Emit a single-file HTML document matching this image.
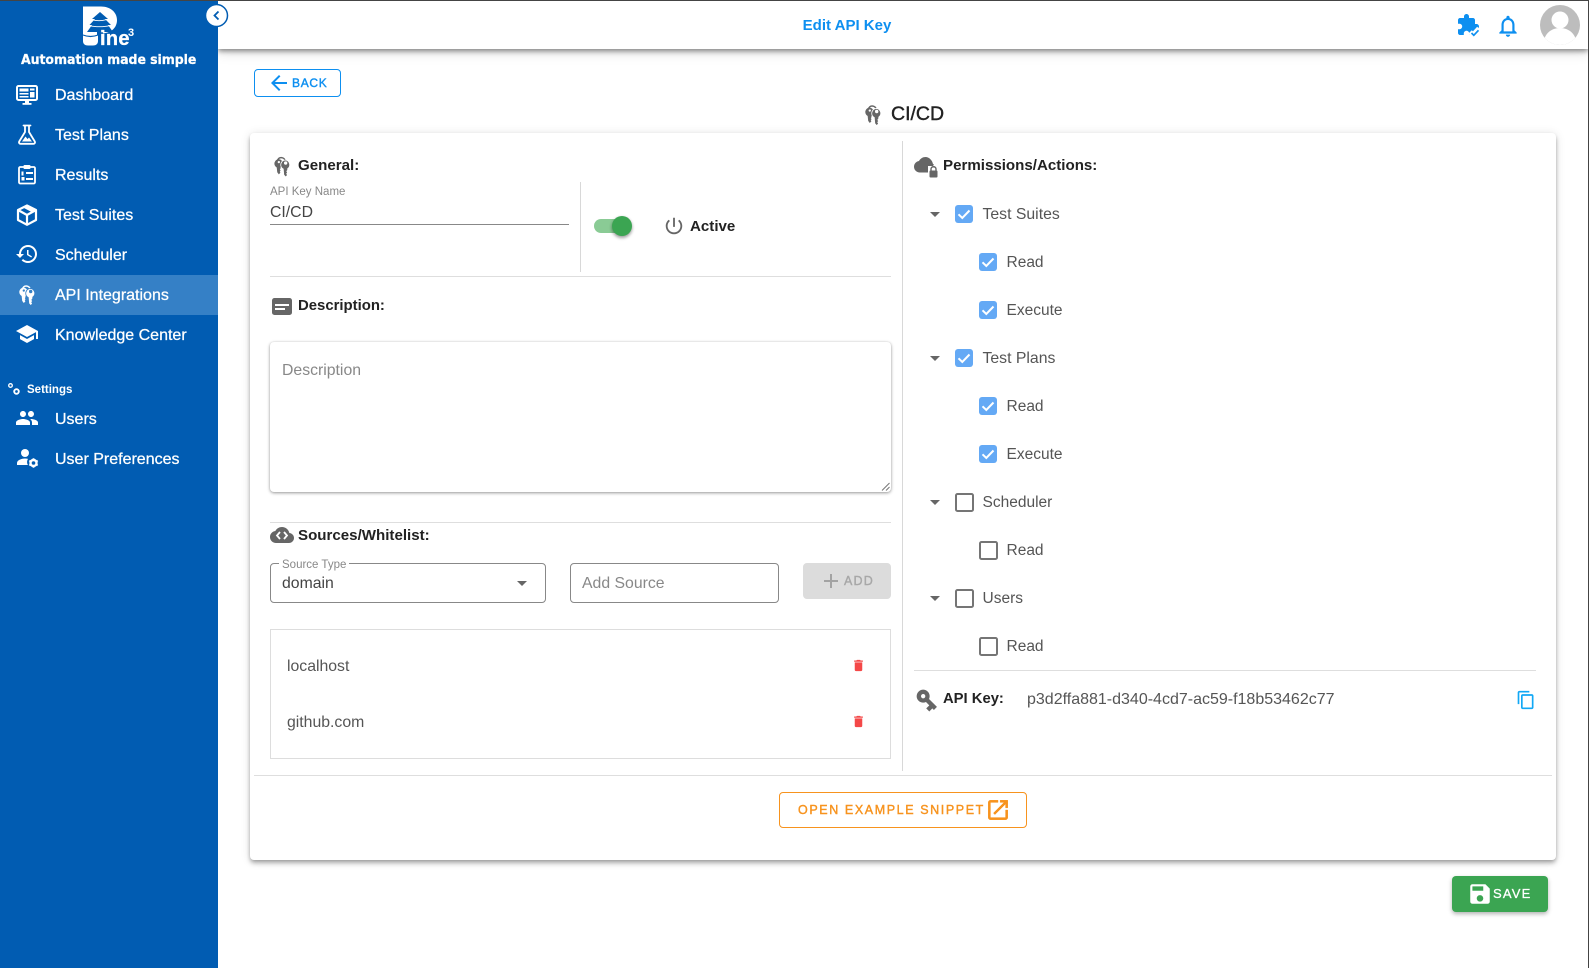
<!DOCTYPE html>
<html><head><meta charset="utf-8"><style>
html,body{margin:0;padding:0;width:1589px;height:968px;overflow:hidden;background:#fff;font-family:"Liberation Sans",sans-serif;color:#222}
.a{position:absolute;white-space:nowrap}
svg{position:absolute;display:block}
.nav{position:absolute;left:55px;color:#fff;font-size:16px;line-height:20px;-webkit-text-stroke:.25px #fff}
.h{position:absolute;font-size:15.1px;font-weight:700;line-height:20px;color:#222;white-space:nowrap}
.t{position:absolute;font-size:15.8px;line-height:20px;color:#555;white-space:nowrap}
.hr{position:absolute;height:1px;background:#dedede}
.vr{position:absolute;width:1px;background:#d8d8d8}
.cb{position:absolute;width:18px;height:18px;border-radius:3px;background:#64a9f5}
.cb svg{left:0;top:0}
.ub{position:absolute;width:14.5px;height:14.5px;border:2px solid #757575;border-radius:2.5px}
.ar{position:absolute;width:0;height:0;border-left:5px solid transparent;border-right:5px solid transparent;border-top:5px solid #666}
</style></head><body>
<svg width="0" height="0" style="position:absolute"><defs>
<symbol id="keys" viewBox="0 0 16 20">
<path d="M3.300 5C3.300 .3 10.300 .3 10.800 5.500" fill="none" stroke="currentColor" stroke-width="1.400"/>
<path fill="currentColor" fill-rule="evenodd" d="M4.500 3a4.200 4.200 0 0 0-2 7.900L3 15.500l1.500 2 1.500-1.500-.6-1.200.8-.8-.7-1 .5-.8.200-1.500A4.200 4.200 0 0 0 4.500 3zM4.500 4.700a1.100 1.100 0 1 1 0 2.200 1.100 1.100 0 0 1 0-2.200z"/>
<path fill="currentColor" fill-rule="evenodd" stroke="var(--bg,#fff)" stroke-width=".8" d="M11 3.800a4.600 4.600 0 0 0-2.300 8.600l.5 5.600 1.800 2 1.800-1.800-.8-1.400.9-1-.8-1.200.8-1 .1-1.600A4.600 4.600 0 0 0 11 3.800zM11 5.500a1.200 1.200 0 1 1 0 2.400 1.200 1.200 0 0 1 0-2.400z"/>
</symbol>
</defs></svg>

<!-- top dark line / right edge -->
<div class="a" style="left:0;top:0;width:1589px;height:1px;background:#444;z-index:9"></div>
<div class="a" style="left:1588px;top:0;width:1px;height:968px;background:#444;z-index:9"></div>

<!-- top bar -->
<div class="a" style="left:218px;top:1px;width:1370px;height:48px;background:#fff;box-shadow:0 2px 5px rgba(0,0,0,.45),0 4px 12px rgba(0,0,0,.12)"></div>
<div class="a" style="left:790px;top:16px;width:114px;text-align:center;font-size:15px;line-height:20px;font-weight:700;color:#0d8ff0">Edit API Key</div>
<svg style="left:1456px;top:13px" width="24" height="24" viewBox="0 0 24 24"><path fill="#0d8ff0" d="M20.500 11H19V7c0-1.100-.9-2-2-2h-4V3.500C13 2.120 11.880 1 10.500 1S8 2.120 8 3.500V5H4c-1.100 0-1.990.9-1.990 2v3.800H3.500c1.490 0 2.700 1.210 2.700 2.700s-1.210 2.700-2.700 2.700H2V20c0 1.100.9 2 2 2h3.800v-1.500c0-1.490 1.210-2.700 2.700-2.700 1.490 0 2.700 1.210 2.700 2.700V22H17c1.100 0 2-.9 2-2v-4h1.500c1.380 0 2.500-1.120 2.500-2.500S21.880 11 20.500 11z"/><path d="M14 19l3 3 6-6.500" fill="none" stroke="#fff" stroke-width="5"/><path d="M15.500 20l2.300 2.300 4.700-5" fill="none" stroke="#0d8ff0" stroke-width="1.700"/></svg>
<svg style="left:1495px;top:13px" width="26" height="26" viewBox="0 0 24 24"><path fill="#0d8ff0" d="M12 22c1.100 0 2-.9 2-2h-4c0 1.100.89 2 2 2zm6-6v-5c0-3.070-1.640-5.640-4.500-6.320V4c0-.83-.67-1.500-1.500-1.500s-1.500.67-1.500 1.500v.68C7.630 5.360 6 7.920 6 11v5l-2 2v1h16v-1l-2-2zm-2 1H8v-6c0-2.480 1.510-4.500 4-4.500s4 2.020 4 4.500v6z"/></svg>
<svg style="left:1540px;top:5px" width="40" height="40" viewBox="0 0 40 40"><defs><clipPath id="c"><circle cx="20" cy="20" r="20"/></clipPath></defs><g clip-path="url(#c)"><rect width="40" height="40" fill="#bdbdbd"/><circle cx="20" cy="15" r="8.500" fill="#fff"/><path d="M3 42c0-13 8-19 17-19s17 6 17 19z" fill="#fff"/></g></svg>

<!-- sidebar -->
<div class="a" style="left:0;top:1px;width:218px;height:967px;background:#015cb2"></div>
<div class="a" style="left:0;top:275px;width:218px;height:40px;background:#3580c6"></div>

<!-- logo -->
<svg style="left:80px;top:4px" width="56" height="44" viewBox="0 0 56 44">
<path fill="#fff" d="M3 2.500H21C30 2.500 37 8 37 16 37 24 31 29 22 29.500H18V37C18 40 16 41.500 13 41.500H8C5 41.500 3 40 3 37Z"/>
<path fill="#015cb2" d="M20 8L28 15H25L31 21H28L33 28H23V31H17V28H7L12 21H9.500L15 15H12Z"/>
<path d="M12 15.800C16 17 22 17 26 15.800M10 21.800C15 23 24 23 29 21.800" fill="none" stroke="#fff" stroke-width=".8"/>
<path d="M3 31C8 33 13 33 18 31" fill="none" stroke="#015cb2" stroke-width="1.200"/>
</svg>
<div class="a" style="left:100px;top:29px;font-size:20px;line-height:20px;font-weight:700;color:#fff;letter-spacing:.3px;-webkit-text-stroke:.3px #fff">ine</div>
<div class="a" style="left:128px;top:28px;font-size:11px;line-height:11px;font-weight:700;color:#fff">3</div>
<div class="a" style="left:21px;top:53px;font-size:13px;line-height:16px;font-weight:700;color:#fff;font-family:'DejaVu Sans',sans-serif;letter-spacing:-.08px;transform-origin:0 50%;transform:scaleX(.965);-webkit-text-stroke:.25px #fff">Automation made simple</div>

<!-- collapse -->
<svg style="left:204px;top:3px" width="25" height="25" viewBox="0 0 25 25"><circle cx="12.500" cy="12.500" r="11" fill="#fff" stroke="#015cb2" stroke-width="1.500"/><path d="M14.500 8.500l-4 4 4 4" fill="none" stroke="#015cb2" stroke-width="1.800"/></svg>

<!-- nav icons -->
<svg style="left:16px;top:84px" width="22" height="22" viewBox="0 0 22 22"><rect x="1" y="2" width="20" height="14" rx="1.500" fill="none" stroke="#fff" stroke-width="2"/><rect x="3.500" y="4.500" width="9" height="3" fill="#fff"/><rect x="14" y="4.500" width="4.500" height="2" fill="#fff"/><rect x="14" y="8" width="4.500" height="5.500" fill="#fff"/><rect x="3.500" y="9" width="9" height="1.500" fill="#fff"/><rect x="3.500" y="12" width="9" height="1.500" fill="#fff"/><rect x="9" y="16.500" width="4" height="2.500" fill="#fff"/><rect x="6.500" y="19" width="9" height="1.800" fill="#fff"/></svg>
<svg style="left:17px;top:124px" width="20" height="21" viewBox="0 0 20 21"><path d="M6.500 1.500h7M8 2v6L2.200 17.500c-.6 1.200.2 2.300 1.400 2.300h12.800c1.200 0 2-1.100 1.400-2.300L12 8V2" fill="none" stroke="#fff" stroke-width="1.800" stroke-linejoin="round" stroke-linecap="round"/><path d="M5 17.500l3.500-5 2 2.500 1.500-1.500 3 4z" fill="#fff"/></svg>
<svg style="left:17px;top:164px" width="20" height="21" viewBox="0 0 20 21"><rect x="2" y="3" width="16" height="16.500" rx="1.200" fill="none" stroke="#fff" stroke-width="1.800"/><rect x="6.500" y="1" width="7" height="4" rx="1" fill="#fff"/><rect x="4.500" y="7.500" width="2" height="4" fill="#fff"/><rect x="9" y="8" width="7" height="2" fill="#fff"/><rect x="4.500" y="13" width="3" height="3.500" fill="#fff"/><rect x="9" y="14" width="7" height="2" fill="#fff"/></svg>
<svg style="left:16px;top:204px" width="22" height="22" viewBox="0 0 22 22"><path d="M11 1.500L2 6v10l9 4.800 9-4.800V6zM11 11v9.500M2 6l9 5 9-5" fill="none" stroke="#fff" stroke-width="2.200" stroke-linejoin="round"/><path d="M11 1.500L20 6l-4 2.200L7 3.500z" fill="#fff"/></svg>
<svg style="left:15px;top:242px" width="24" height="24" viewBox="0 0 24 24"><path fill="#fff" d="M13 3c-4.970 0-9 4.030-9 9H1l3.890 3.890.07.14L9 12H6c0-3.870 3.130-7 7-7s7 3.130 7 7-3.130 7-7 7c-1.930 0-3.680-.79-4.940-2.060l-1.420 1.420C8.270 19.990 10.510 21 13 21c4.970 0 9-4.030 9-9s-4.030-9-9-9zm-1 5v5l4.280 2.540.72-1.210-3.500-2.080V8H12z"/></svg>
<svg style="left:19px;top:284px;color:#fff;--bg:#3580c6" width="17" height="22"><use href="#keys" width="17" height="22"/></svg>
<svg style="left:15px;top:322px" width="24" height="24" viewBox="0 0 24 24"><path fill="#fff" d="M5 13.180v4L12 21l7-3.820v-4L12 17l-7-3.820zM12 3L1 9l11 6 9-4.910V17h2V9L12 3z"/></svg>
<svg style="left:7px;top:382px" width="14" height="14" viewBox="0 0 14 14"><circle cx="3.500" cy="3.500" r="1.800" fill="none" stroke="#fff" stroke-width="1.300"/><circle cx="9.500" cy="9.500" r="2.300" fill="none" stroke="#fff" stroke-width="1.900"/></svg>
<svg style="left:15px;top:406px" width="24" height="24" viewBox="0 0 24 24"><path fill="#fff" d="M16 11c1.660 0 2.990-1.340 2.990-3S17.660 5 16 5c-1.660 0-3 1.340-3 3s1.340 3 3 3zm-8 0c1.660 0 2.990-1.340 2.990-3S9.660 5 8 5C6.340 5 5 6.340 5 8s1.340 3 3 3zm0 2c-2.330 0-7 1.170-7 3.500V19h14v-2.500c0-2.330-4.670-3.500-7-3.500zm8 0c-.29 0-.62.020-.97.050 1.160.84 1.970 1.970 1.970 3.450V19h6v-2.500c0-2.330-4.670-3.500-7-3.500z"/></svg>
<svg style="left:15px;top:446px" width="24" height="24" viewBox="0 0 24 24"><circle cx="10" cy="7" r="4" fill="#fff"/><path fill="#fff" d="M2 19v-2c0-3 5-4.500 8-4.500 1 0 2 .1 3 .4-.7 1-1 2.400-.9 3.600.1.900.3 1.800.9 2.500z"/><circle cx="18.500" cy="17" r="3" fill="none" stroke="#fff" stroke-width="2.400"/><path d="M18.500 12.200v1.800M18.500 20v1.800M14.300 14.600l1.600 1M21.100 18.400l1.600 1M14.300 19.400l1.600-1M21.100 15.600l1.600-1" stroke="#fff" stroke-width="1.800"/></svg>

<div class="nav" style="top:86px">Dashboard</div>
<div class="nav" style="top:126px">Test Plans</div>
<div class="nav" style="top:166px">Results</div>
<div class="nav" style="top:206px">Test Suites</div>
<div class="nav" style="top:246px">Scheduler</div>
<div class="nav" style="top:286px">API Integrations</div>
<div class="nav" style="top:326px">Knowledge Center</div>
<div class="a" style="left:27px;top:383px;font-size:11.500px;line-height:14px;color:#fff;font-weight:700">Settings</div>
<div class="nav" style="top:410px">Users</div>
<div class="nav" style="top:450px">User Preferences</div>

<!-- back -->
<div class="a" style="left:254px;top:69px;width:85px;height:26px;border:1px solid #0d8ff0;border-radius:4px"></div>
<svg style="left:267px;top:71px" width="24" height="24" viewBox="0 0 24 24"><path fill="#0d8ff0" d="M20 11H7.830l5.590-5.590L12 4l-8 8 8 8 1.410-1.410L7.830 13H20v-2z"/></svg>
<div class="a" style="left:292px;top:75px;font-size:12px;line-height:16px;color:#0d8ff0;letter-spacing:.7px;-webkit-text-stroke:.4px #0d8ff0">BACK</div>

<!-- heading -->
<svg style="left:865px;top:104px;color:#666" width="17" height="22"><use href="#keys" width="17" height="22"/></svg>
<div class="a" style="left:891px;top:102px;font-size:19.500px;line-height:24px;color:#222;-webkit-text-stroke:.4px #222">CI/CD</div>

<!-- card -->
<div class="a" style="left:250px;top:133px;width:1306px;height:727px;background:#fff;border-radius:4px;box-shadow:0 2px 4px -1px rgba(0,0,0,.3),0 4px 5px rgba(0,0,0,.14),0 1px 10px rgba(0,0,0,.12)"></div>

<!-- general -->
<svg style="left:274px;top:156px;color:#666" width="17" height="21"><use href="#keys" width="17" height="21"/></svg>
<div class="h" style="left:298px;top:156px">General:</div>
<div class="a" style="left:270px;top:185px;font-size:11.500px;line-height:14px;color:#888">API Key Name</div>
<div class="t" style="left:270px;top:203px;color:#444">CI/CD</div>
<div class="hr" style="left:270px;top:224px;width:299px;background:#888"></div>
<div class="vr" style="left:580px;top:182px;height:90px"></div>
<div class="a" style="left:594px;top:219px;width:34px;height:14px;border-radius:7px;background:#8acb95"></div>
<div class="a" style="left:612px;top:216px;width:20px;height:20px;border-radius:50%;background:#3ba552;box-shadow:0 2px 3px rgba(0,0,0,.3),0 1px 3px rgba(0,0,0,.15)"></div>
<svg style="left:663px;top:215px" width="22" height="22" viewBox="0 0 24 24"><path fill="#666" d="M13 3h-2v10h2V3zm4.830 2.170l-1.420 1.420C17.990 7.860 19 9.810 19 12c0 3.870-3.130 7-7 7s-7-3.130-7-7c0-2.190 1.010-4.140 2.580-5.420L6.170 5.170C4.230 6.820 3 9.260 3 12c0 4.970 4.030 9 9 9s9-4.030 9-9c0-2.740-1.230-5.180-3.170-6.830z"/></svg>
<div class="h" style="left:690px;top:217px">Active</div>
<div class="hr" style="left:270px;top:276px;width:621px"></div>

<!-- description -->
<svg style="left:272px;top:298px" width="20" height="17" viewBox="0 0 20 17"><rect width="20" height="17" rx="2.500" fill="#666"/><rect x="3" y="6" width="14" height="2" fill="#fff"/><rect x="3" y="10" width="10" height="2" fill="#fff"/></svg>
<div class="h" style="left:298px;top:296px;font-size:14.900px">Description:</div>
<div class="a" style="left:270px;top:342px;width:621px;height:150px;border-radius:4px;background:#fff;box-shadow:0 1px 3px rgba(0,0,0,.4),0 0 2px rgba(0,0,0,.06)"></div>
<div class="t" style="left:282px;top:361px;color:#888">Description</div>
<svg style="left:881px;top:482px" width="9" height="9" viewBox="0 0 9 9"><path d="M1 8.500L8.500 1M5 8.500L8.500 5" stroke="#777" stroke-width="1"/></svg>
<div class="hr" style="left:270px;top:522px;width:621px"></div>

<!-- sources -->
<svg style="left:270px;top:526px" width="24" height="18" viewBox="0 0 24 18"><path fill="#666" d="M19.350 7C18.670 3.500 15.640 1 12 1 9.110 1 6.600 2.600 5.350 5 2.340 5.360 0 7.900 0 11c0 3.310 2.690 6 6 6h13c2.760 0 5-2.240 5-5 0-2.640-2.050-4.800-4.650-5z"/><path d="M10 6l-3 3.500 3 3.500M14 6l3 3.500-3 3.500" fill="none" stroke="#fff" stroke-width="1.800"/></svg>
<div class="h" style="left:298px;top:526px">Sources/Whitelist:</div>
<div class="a" style="left:270px;top:563px;width:274px;height:38px;border:1px solid #888;border-radius:4px"></div>
<div class="a" style="left:279px;top:558px;padding:0 3px;background:#fff;font-size:11.500px;line-height:14px;color:#888">Source Type</div>
<div class="t" style="left:282px;top:574px;color:#444">domain</div>
<div class="ar" style="left:517px;top:581px"></div>
<div class="a" style="left:570px;top:563px;width:207px;height:38px;border:1px solid #888;border-radius:4px"></div>
<div class="t" style="left:582px;top:574px;color:#888">Add Source</div>
<div class="a" style="left:803px;top:563px;width:88px;height:36px;border-radius:4px;background:#dcdcdc"></div>
<svg style="left:819px;top:569px" width="24" height="24" viewBox="0 0 24 24"><path fill="#a3a3a3" d="M19 13h-6v6h-2v-6H5v-2h6V5h2v6h6v2z"/></svg>
<div class="a" style="left:844px;top:573px;font-size:12.500px;line-height:16px;color:#a8a8a8;letter-spacing:1.200px;-webkit-text-stroke:.4px #a8a8a8">ADD</div>
<div class="a" style="left:270px;top:629px;width:619px;height:128px;border:1px solid #ddd"></div>
<div class="t" style="left:287px;top:657px">localhost</div>
<div class="t" style="left:287px;top:713px">github.com</div>
<svg style="left:851px;top:658px" width="15" height="15" viewBox="0 0 24 24"><path fill="#f44848" d="M6 19c0 1.100.9 2 2 2h8c1.100 0 2-.9 2-2V7H6v12zM19 4h-3.500l-1-1h-5l-1 1H5v2h14V4z"/></svg>
<svg style="left:851px;top:714px" width="15" height="15" viewBox="0 0 24 24"><path fill="#f44848" d="M6 19c0 1.100.9 2 2 2h8c1.100 0 2-.9 2-2V7H6v12zM19 4h-3.500l-1-1h-5l-1 1H5v2h14V4z"/></svg>

<div class="vr" style="left:902px;top:141px;height:630px"></div>
<div class="hr" style="left:254px;top:775px;width:1298px"></div>

<!-- snippet -->
<div class="a" style="left:779px;top:792px;width:246px;height:34px;border:1px solid #f7931e;border-radius:4px"></div>
<div class="a" style="left:798px;top:802px;font-size:12.500px;line-height:16px;color:#f7931e;letter-spacing:1.600px;-webkit-text-stroke:.4px #f7931e">OPEN EXAMPLE SNIPPET</div>
<svg style="left:985px;top:797px" width="26" height="26" viewBox="0 0 24 24"><path fill="#f7931e" stroke="#f7931e" stroke-width=".4" d="M19 19H5V5h7V3H5c-1.110 0-2 .9-2 2v14c0 1.100.89 2 2 2h14c1.100 0 2-.9 2-2v-7h-2v7zM14 3v2h3.590l-9.830 9.830 1.410 1.410L19 6.410V10h2V3h-7z"/></svg>

<!-- permissions -->
<svg style="left:914px;top:156px" width="25" height="22" viewBox="0 0 25 22"><path fill="#666" d="M19 8C18.300 4.500 15.300 1 11.500 1 8.700 1 6.300 2.700 5 5 2.200 5.400 0 7.800 0 10.800c0 3.200 2.600 5.700 5.800 5.700H17c0-4 3-8 3-8z"/><rect x="14" y="10" width="11" height="12" fill="#fff"/><path d="M17 14.500v-1.500c0-3 5-3 5 0v1.500" stroke="#666" stroke-width="1.400" fill="none"/><rect x="15.500" y="14.500" width="8" height="7" rx="1" fill="#666"/></svg>
<div class="h" style="left:943px;top:156px">Permissions/Actions:</div>

<div class="ar" style="left:930px;top:212px"></div>
<div class="cb" style="left:955px;top:205px"><svg width="18" height="18"><path d="M3.500 9.300l3.800 3.700 7.200-7.500" fill="none" stroke="#fff" stroke-width="2"/></svg></div>
<div class="t" style="left:982.500px;top:205px">Test Suites</div>
<div class="cb" style="left:979px;top:253px"><svg width="18" height="18"><path d="M3.500 9.300l3.800 3.700 7.200-7.500" fill="none" stroke="#fff" stroke-width="2"/></svg></div>
<div class="t" style="left:1006.500px;top:253px;font-size:15.500px">Read</div>
<div class="cb" style="left:979px;top:301px"><svg width="18" height="18"><path d="M3.500 9.300l3.800 3.700 7.200-7.500" fill="none" stroke="#fff" stroke-width="2"/></svg></div>
<div class="t" style="left:1006.500px;top:301px;font-size:15.500px">Execute</div>
<div class="ar" style="left:930px;top:356px"></div>
<div class="cb" style="left:955px;top:349px"><svg width="18" height="18"><path d="M3.500 9.300l3.800 3.700 7.200-7.500" fill="none" stroke="#fff" stroke-width="2"/></svg></div>
<div class="t" style="left:982.500px;top:349px">Test Plans</div>
<div class="cb" style="left:979px;top:397px"><svg width="18" height="18"><path d="M3.500 9.300l3.800 3.700 7.200-7.500" fill="none" stroke="#fff" stroke-width="2"/></svg></div>
<div class="t" style="left:1006.500px;top:397px;font-size:15.500px">Read</div>
<div class="cb" style="left:979px;top:445px"><svg width="18" height="18"><path d="M3.500 9.300l3.800 3.700 7.200-7.500" fill="none" stroke="#fff" stroke-width="2"/></svg></div>
<div class="t" style="left:1006.500px;top:445px;font-size:15.500px">Execute</div>
<div class="ar" style="left:930px;top:500px"></div>
<div class="ub" style="left:955px;top:493px"></div>
<div class="t" style="left:982.500px;top:493px;font-size:15.500px">Scheduler</div>
<div class="ub" style="left:979px;top:541px"></div>
<div class="t" style="left:1006.500px;top:541px;font-size:15.500px">Read</div>
<div class="ar" style="left:930px;top:596px"></div>
<div class="ub" style="left:955px;top:589px"></div>
<div class="t" style="left:982.500px;top:589px;font-size:15.500px">Users</div>
<div class="ub" style="left:979px;top:637px"></div>
<div class="t" style="left:1006.500px;top:637px;font-size:15.500px">Read</div>

<div class="hr" style="left:914px;top:670px;width:622px"></div>
<svg style="left:914px;top:687px;transform:rotate(45deg)" width="26" height="26" viewBox="0 0 24 24"><path fill="#666" d="M12.650 10C11.830 7.670 9.610 6 7 6c-3.310 0-6 2.690-6 6s2.690 6 6 6c2.610 0 4.830-1.670 5.650-4H17v4h4v-4h2v-4H12.650zM7 14c-1.100 0-2-.9-2-2s.9-2 2-2 2 .9 2 2-.9 2-2 2z"/></svg>
<div class="h" style="left:943px;top:689px;font-size:14.800px">API Key:</div>
<div class="t" style="left:1027px;top:689.500px;font-size:16px">p3d2ffa881-d340-4cd7-ac59-f18b53462c77</div>
<svg style="left:1516px;top:690px" width="20" height="20" viewBox="0 0 24 24"><path fill="#12a8f5" d="M16 1H4c-1.100 0-2 .9-2 2v14h2V3h12V1zm3 4H8c-1.100 0-2 .9-2 2v14c0 1.100.9 2 2 2h11c1.100 0 2-.9 2-2V7c0-1.100-.9-2-2-2zm0 16H8V7h11v14z"/></svg>

<!-- save -->
<div class="a" style="left:1452px;top:876px;width:96px;height:36px;border-radius:4px;background:#3ba552;box-shadow:0 2px 4px rgba(0,0,0,.3)"></div>
<svg style="left:1467px;top:881px" width="26" height="26" viewBox="0 0 24 24"><path fill="#fff" d="M17 3H5c-1.110 0-2 .9-2 2v14c0 1.100.89 2 2 2h14c1.100 0 2-.9 2-2V7l-4-4zm-5 16c-1.660 0-3-1.340-3-3s1.340-3 3-3 3 1.340 3 3-1.340 3-3 3zm3-10H5V5h10v4z"/></svg>
<div class="a" style="left:1493px;top:886px;font-size:13px;line-height:16px;color:#fff;letter-spacing:1.200px;-webkit-text-stroke:.3px #fff">SAVE</div>
</body></html>
